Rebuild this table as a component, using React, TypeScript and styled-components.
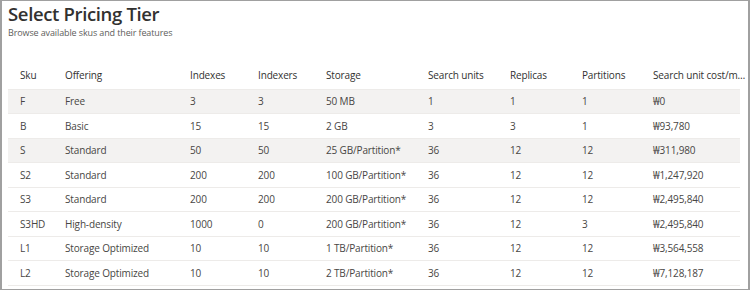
import React from 'react'
import styled, { createGlobalStyle } from 'styled-components'

const GlobalStyle = createGlobalStyle`
    html, body {
        margin: 0;
        padding: 0;
        background: #fff;
    }
    body {
        font-family: "Open Sans", "Noto Sans", sans-serif;
        color: #323130;
    }
`

const Frame = styled.div`
    box-sizing: border-box;
    width: 750px;
    height: 290px;
    border-top: 1px solid #a0a0a0;
    border-left: 2px solid #a0a0a0;
    border-right: 2px solid #a0a0a0;
    border-bottom: 1px solid #a0a0a0;
    padding: 0 8px 0 6px;
    overflow: hidden;
`

const Title = styled.h1`
    margin: 0;
    padding-top: 1px;
    font-size: 18.5px;
    line-height: 24px;
    font-weight: 600;
    letter-spacing: -0.35px;
    color: #323130;
`

const Subtitle = styled.div`
    font-size: 9px;
    line-height: 14px;
    letter-spacing: -0.12px;
    color: #605e5c;
`

const Table = styled.table`
    margin-top: 21px;
    width: 732px;
    border-collapse: collapse;
    table-layout: fixed;
    font-size: 10px;
    letter-spacing: -0.15px;
`

const HeadCell = styled.th<{ $w: number }>`
    width: ${p => p.$w}px;
    height: 28px;
    padding: 0 0 0 12px;
    text-align: left;
    font-weight: 400;
    color: #323130;
    white-space: nowrap;
    box-sizing: border-box;
`

const Row = styled.tr<{ $shaded: boolean }>`
    background: ${p => (p.$shaded ? '#f3f2f1' : '#fff')};
    border-top: 1px solid #edebe9;
    border-bottom: 1px solid #edebe9;
`

const Cell = styled.td`
    height: 23.5px;
    padding: 0 0 0 12px;
    color: #484644;
    white-space: nowrap;
    overflow: hidden;
    text-overflow: ellipsis;
`

// last header is shown cut short, as in the portal
const columns = [
    { label: 'Sku', w: 45 },
    { label: 'Offering', w: 125 },
    { label: 'Indexes', w: 68 },
    { label: 'Indexers', w: 68 },
    { label: 'Storage', w: 102 },
    { label: 'Search units', w: 82 },
    { label: 'Replicas', w: 72 },
    { label: 'Partitions', w: 71 },
    { label: 'Search unit cost/m…', w: 99 },
]

const tiers = [
    ['F', 'Free', '3', '3', '50 MB', '1', '1', '1', '₩0'],
    ['B', 'Basic', '15', '15', '2 GB', '3', '3', '1', '₩93,780'],
    ['S', 'Standard', '50', '50', '25 GB/Partition*', '36', '12', '12', '₩311,980'],
    ['S2', 'Standard', '200', '200', '100 GB/Partition*', '36', '12', '12', '₩1,247,920'],
    ['S3', 'Standard', '200', '200', '200 GB/Partition*', '36', '12', '12', '₩2,495,840'],
    ['S3HD', 'High-density', '1000', '0', '200 GB/Partition*', '36', '12', '3', '₩2,495,840'],
    ['L1', 'Storage Optimized', '10', '10', '1 TB/Partition*', '36', '12', '12', '₩3,564,558'],
    ['L2', 'Storage Optimized', '10', '10', '2 TB/Partition*', '36', '12', '12', '₩7,128,187'],
]

function App() {
    return (
        <Frame>
            <GlobalStyle />
            <Title>Select Pricing Tier</Title>
            <Subtitle>Browse available skus and their features</Subtitle>
            <Table>
                <thead>
                    <tr>
                        {columns.map(c => (
                            <HeadCell key={c.label} $w={c.w}>{c.label}</HeadCell>
                        ))}
                    </tr>
                </thead>
                <tbody>
                    {tiers.map((t, i) => (
                        <Row key={t[0]} $shaded={i === 0 || i === 2}>
                            {t.map((v, j) => (
                                <Cell key={j}>{v}</Cell>
                            ))}
                        </Row>
                    ))}
                </tbody>
            </Table>
        </Frame>
    )
}

export default App
